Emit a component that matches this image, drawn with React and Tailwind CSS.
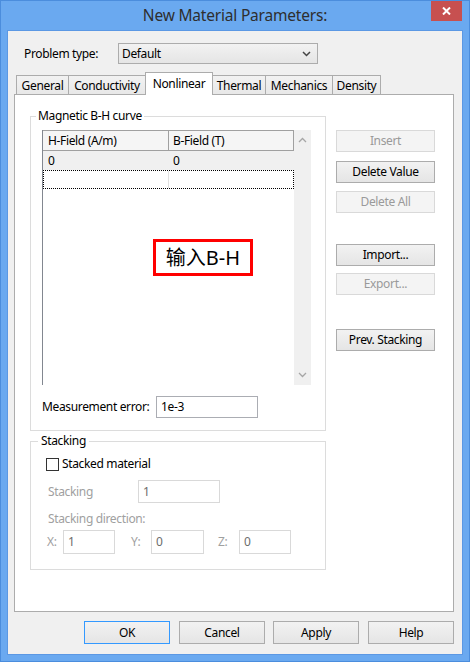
import React from 'react'

const font = { fontFamily: '"Segoe UI", "Noto Sans", "Noto Sans CJK SC", sans-serif' }

const Btn = ({ children, disabled, className = '' }) => (
  <div
    className={`h-[22px] flex items-center justify-center border text-[12px] ${
      disabled
        ? 'border-[#d9d9d9] bg-[#f4f4f4] text-[#9a9a9a]'
        : 'border-[#acacac] bg-linear-to-b from-[#f2f2f2] to-[#e5e5e5] text-black'
    } ${className}`}
  >
    {children}
  </div>
)

const Field = ({ value, disabled, className = '' }) => (
  <div
    className={`border bg-white flex items-center px-[4px] text-[12px] ${
      disabled ? 'border-[#d9d9d9] text-[#6d6d6d]' : 'border-[#abadb3] text-black'
    } ${className}`}
  >
    {value}
  </div>
)

const tabs = [
  { label: 'General', w: 'w-[53px]' },
  { label: 'Conductivity', w: 'w-[78px]' },
  { label: 'Nonlinear', w: 'w-[68px]', active: true },
  { label: 'Thermal', w: 'w-[54px]' },
  { label: 'Mechanics', w: 'w-[68px]' },
  { label: 'Density', w: 'w-[49px]' },
]

const Chevron = ({ up }) => (
  <svg width="9" height="6" viewBox="0 0 9 6">
    <polyline
      points={up ? '1,5 4.5,1.5 8,5' : '1,1 4.5,4.5 8,1'}
      fill="none"
      stroke="#a6a6a6"
      strokeWidth="1.3"
    />
  </svg>
)

const App = () => {
  return (
    <div
      className="w-[470px] h-[662px] bg-[#6aa9f0] border border-[#4b8ddd] flex flex-col text-[12px] tracking-[-0.35px] text-black"
      style={font}
    >
      {/* title bar */}
      <div className="h-[29px] grid grid-cols-[1fr_auto_1fr] items-start">
        <div />
        <div className="h-[29px] flex items-center text-[15.5px] tracking-[-0.2px] text-[#2e2e2e]">
          New Material Parameters:
        </div>
        <div className="flex justify-end pr-[7px]">
          <div className="w-[31px] h-[20px] bg-[#c75050] flex items-center justify-center">
            <svg width="9" height="8" viewBox="0 0 9 8">
              <path d="M1 0.5 L8 7.5 M8 0.5 L1 7.5" stroke="#fff" strokeWidth="2" />
            </svg>
          </div>
        </div>
      </div>

      {/* client area */}
      <div className="mx-[6px] mb-[6px] flex-1 border border-[#5b98e4] bg-[#f0f0f0] flex flex-col">
        <div className="flex items-center mt-[12px] pl-[16px]">
          <div className="w-[94px]">Problem type:</div>
          <div className="w-[200px] h-[21px] border border-[#acacac] bg-linear-to-b from-[#f2f2f2] to-[#e5e5e5] flex items-center justify-between pl-[3px] pr-[6px]">
            <span>Default</span>
            <svg width="9" height="6" viewBox="0 0 9 6">
              <polyline points="1,1 4.5,4.5 8,1" fill="none" stroke="#444" strokeWidth="1.5" />
            </svg>
          </div>
        </div>

        {/* tabs */}
        <div className="flex items-end mt-[8px] ml-[8px] h-[22px] relative z-10">
          {tabs.map((t, i) => (
            <div
              key={t.label}
              className={`${t.w} ${i > 0 ? '-ml-px' : ''} flex justify-center border-t border-l border-r border-[#acacac] ${
                t.active
                  ? 'h-[23px] -mb-px bg-white pt-[2px] relative z-10'
                  : 'h-[19px] bg-linear-to-b from-[#f2f2f2] to-[#e8e8e8] pt-[1px]'
              }`}
            >
              {t.label}
            </div>
          ))}
        </div>

        {/* tab panel */}
        <div className="ml-[6px] w-[440px] h-[518px] border border-[#acacac] bg-white flex pl-[15px]">
          <div className="w-[296px] flex flex-col">
            <fieldset className="mt-[13px] border border-[#dcdcdc] px-[11px] pb-[12px]">
              <legend className="-ml-[6px] px-[2px] leading-[16px]">Magnetic B-H curve</legend>
              <div className="mt-[6px] w-[269px] h-[255px] border-l border-[#828790] flex relative">
                <div className="w-[251px] flex flex-col">
                  <div className="flex h-[21px] bg-[#f5f5f5] border-t border-b border-[#a0a0a0]">
                    <div className="w-[126px] border-r border-[#a0a0a0] pl-[5px] flex items-center">H-Field (A/m)</div>
                    <div className="w-[125px] border-r border-[#a0a0a0] pl-[4px] flex items-center">B-Field (T)</div>
                  </div>
                  <div className="flex h-[19px] bg-[#f0f0f0]">
                    <div className="w-[126px] pl-[5px] flex items-center">0</div>
                    <div className="w-[125px] pl-[4px] flex items-center">0</div>
                  </div>
                  <div className="flex h-[19px] border border-dotted border-black">
                    <div className="w-[125px] border-r border-[#e0e0e0]" />
                  </div>
                </div>
                <div className="w-[17px] bg-[#f0f0f0] flex flex-col items-center justify-between py-[7px]">
                  <Chevron up />
                  <Chevron />
                </div>
                <div className="absolute left-[110px] top-[109px] w-[100px] h-[37px] border-[3px] border-[#ff0000] bg-white flex items-center justify-center text-[20px] tracking-normal leading-none">
                  输入B-H
                </div>
              </div>
              <div className="flex items-center mt-[11px]">
                <div className="w-[114px]">Measurement error:</div>
                <Field value="1e-3" className="w-[102px] h-[22px]" />
              </div>
            </fieldset>

            <fieldset className="mt-[2px] border border-[#dcdcdc] pl-[15px] pb-[15px]">
              <legend className="-ml-[8px] px-[3px] leading-[16px]">Stacking</legend>
              <div className="flex items-center mt-[7px] h-[16px]">
                <div className="w-[13px] h-[13px] border border-[#333] bg-white" />
                <span className="ml-[3px]">Stacked material</span>
              </div>
              <div className="flex items-center mt-[8px] pl-[2px] text-[#a0a0a0]">
                <div className="w-[90px]">Stacking</div>
                <Field value="1" disabled className="w-[82px] h-[23px]" />
              </div>
              <div className="mt-[8px] h-[16px] leading-[16px] pl-[2px] text-[#a0a0a0]">Stacking direction:</div>
              <div className="flex items-center mt-[3px] pl-[1px] text-[#a0a0a0]">
                <div className="w-[16px]">X:</div>
                <Field value="1" disabled className="w-[52px] h-[24px]" />
                <div className="w-[20px] ml-[16px]">Y:</div>
                <Field value="0" disabled className="w-[53px] h-[24px]" />
                <div className="w-[21px] ml-[14px]">Z:</div>
                <Field value="0" disabled className="w-[52px] h-[24px]" />
              </div>
            </fieldset>
          </div>

          <div className="ml-[10px] mt-[35px] w-[99px] flex flex-col">
            <Btn disabled>Insert</Btn>
            <Btn className="mt-[9px]">Delete Value</Btn>
            <Btn disabled className="mt-[8px]">Delete All</Btn>
            <Btn className="mt-[31px]">Import...</Btn>
            <Btn disabled className="mt-[7px]">Export...</Btn>
            <Btn className="mt-[34px]">Prev. Stacking</Btn>
          </div>
        </div>

        {/* bottom buttons */}
        <div className="flex mt-[9px] ml-[76px]">
          <Btn className="w-[86px] h-[23px] !border-[#3399ff]">OK</Btn>
          <Btn className="w-[86px] h-[23px] ml-[9px]">Cancel</Btn>
          <Btn className="w-[86px] h-[23px] ml-[8px]">Apply</Btn>
          <Btn className="w-[86px] h-[23px] ml-[9px]">Help</Btn>
        </div>
      </div>
    </div>
  )
}

export default App
